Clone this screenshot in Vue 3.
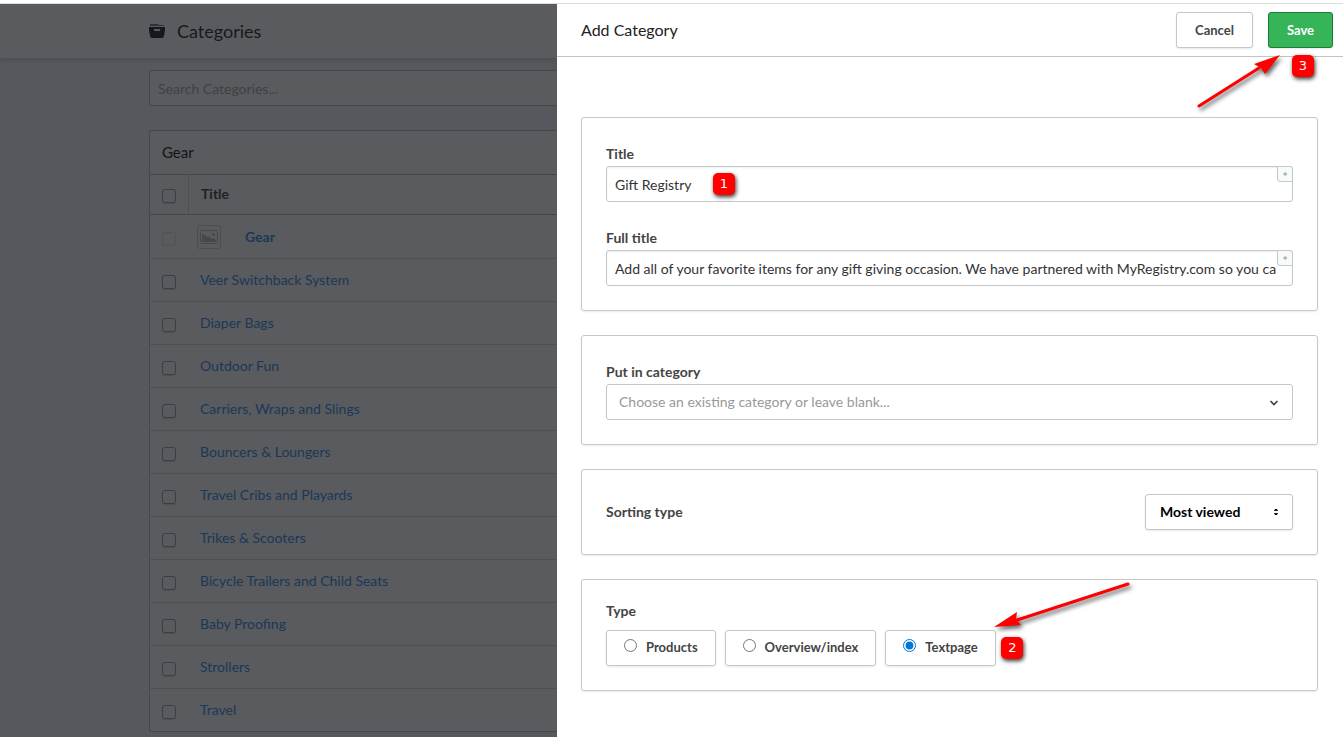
<script setup>
import { ref } from 'vue'

const search = ref('')
const title = ref('Gift Registry')
const fullTitle = ref('Add all of your favorite items for any gift giving occasion. We have partnered with MyRegistry.com so you ca')
const parent = ref('')
const sorting = ref('viewed')
const type = ref('Textpage')
const types = ['Products', 'Overview/index', 'Textpage']
const categories = [
  'Veer Switchback System',
  'Diaper Bags',
  'Outdoor Fun',
  'Carriers, Wraps and Slings',
  'Bouncers & Loungers',
  'Travel Cribs and Playards',
  'Trikes & Scooters',
  'Bicycle Trailers and Child Seats',
  'Baby Proofing',
  'Strollers',
  'Travel',
]
</script>

<template>
  <div class="app">
    <div class="topline"></div>
    <div class="shell">
      <section class="page">
        <header class="page-head">
          <svg class="archive" width="16" height="14" viewBox="0 0 16 14" aria-hidden="true">
            <path d="M1 0h8l1 1h5v1H1z" fill="#2e3136" />
            <path d="M0 3h16v3l-1 6q-.3 2-2 2H3q-1.700 0-2-2L0 6z" fill="#15191f" />
            <path d="M5 5h6v2H5z" fill="#5a5b5e" />
          </svg>
          <h1>Categories</h1>
        </header>
        <div class="page-body">
          <input v-model="search" class="search" type="text" placeholder="Search Categories..." aria-label="Search Categories" />
          <div class="panel">
            <h2>Gear</h2>
            <table>
              <thead>
                <tr>
                  <th class="pick"><input type="checkbox" aria-label="Select all" /></th>
                  <th class="name">Title</th>
                </tr>
              </thead>
              <tbody>
                <tr class="parent">
                  <td class="pick"><input type="checkbox" disabled aria-label="Gear" /></td>
                  <td class="name">
                    <a class="parent-link" href="#">
                      <span class="thumb">
                        <svg width="18" height="14" viewBox="0 0 18 14" aria-hidden="true">
                          <rect x=".5" y=".5" width="17" height="13" rx="1" fill="none" stroke="#44494c" />
                          <path d="M2 12V5l2-1 3 3 2-1 2 3 2-1 3 2v2z" fill="#44494c" />
                          <circle cx="13.500" cy="4.500" r="1.500" fill="#44494c" />
                        </svg>
                      </span>
                      Gear
                    </a>
                  </td>
                </tr>
                <tr v-for="c in categories" :key="c">
                  <td class="pick"><input type="checkbox" :aria-label="c" /></td>
                  <td class="name"><a href="#">{{ c }}</a></td>
                </tr>
              </tbody>
            </table>
          </div>
        </div>
      </section>

      <form class="drawer" @submit.prevent>
        <header class="drawer-head">
          <h2>Add Category</h2>
          <button type="button" class="btn">Cancel</button>
          <div class="anchor">
            <button type="submit" class="btn save">Save</button>
            <svg class="arrow arrow-save" width="90" height="60" viewBox="0 0 90 60" aria-hidden="true">
              <path d="M4 53L64 15" stroke="#f00" stroke-width="3" stroke-linecap="round" />
              <path d="M85 2L70 21 66 15 59 11z" fill="#f00" />
            </svg>
            <span class="mark mark-save">3</span>
          </div>
        </header>

        <div class="drawer-body">
          <div class="card">
            <div class="field">
              <label for="title">Title</label>
              <div class="control">
                <input id="title" v-model="title" type="text" />
                <span class="required">*</span>
                <span class="mark mark-title">1</span>
              </div>
            </div>
            <div class="field">
              <label for="full">Full title</label>
              <div class="control">
                <input id="full" v-model="fullTitle" type="text" />
                <span class="required">*</span>
              </div>
            </div>
          </div>

          <div class="card">
            <div class="field">
              <label for="parent">Put in category</label>
              <div class="control">
                <select id="parent" v-model="parent" class="placeholder">
                  <option value="">Choose an existing category or leave blank...</option>
                  <option v-for="c in categories" :key="c">{{ c }}</option>
                </select>
                <svg class="chevron" width="10" height="6" viewBox="0 0 10 6" aria-hidden="true">
                  <path d="M1.500 1L5 4.500 8.500 1" fill="none" stroke="#444" stroke-width="1.700" />
                </svg>
              </div>
            </div>
          </div>

          <div class="card row">
            <label for="sorting">Sorting type</label>
            <div class="control">
              <select id="sorting" v-model="sorting" class="sorting">
                <option value="viewed">Most viewed</option>
                <option value="newest">Newest</option>
              </select>
              <svg class="updown" width="6" height="6" viewBox="0 0 6 6" aria-hidden="true">
                <path d="M1 2L2 0h2l1 2zM1 4h4L4 6H2z" fill="#111" />
              </svg>
            </div>
          </div>

          <fieldset class="card">
            <div id="type-label" class="group-label">Type</div>
            <div class="options" role="radiogroup" aria-labelledby="type-label">
              <label v-for="t in types" :key="t" class="option">
                <input v-model="type" type="radio" name="type" :value="t" />
                <span>{{ t }}</span>
                <template v-if="t === 'Textpage'">
                  <svg class="arrow arrow-type" width="150" height="60" viewBox="0 0 150 60" aria-hidden="true">
                    <path d="M140 10L26 47" stroke="#f00" stroke-width="3" stroke-linecap="round" />
                    <path d="M6 53L29 38 28 45 33 51z" fill="#f00" />
                  </svg>
                  <b class="mark mark-type">2</b>
                </template>
              </label>
            </div>
          </fieldset>
        </div>
      </form>
    </div>
  </div>
</template>

<style>
body {
  overflow: hidden;
}
</style>

<style scoped>
.app,
.app * {
  box-sizing: border-box;
}
.app {
  display: flex;
  flex-direction: column;
  min-height: 100vh;
  font: 14px/20px Lato, sans-serif;
  color: #444;
  background: #fff;
}
h1,
h2 {
  margin: 0;
  font-weight: 400;
}
input,
select,
button {
  margin: 0;
  font: inherit;
  color: inherit;
}
a {
  color: #1a3857;
  text-decoration: none;
}
.topline {
  height: 4px;
  background: #fff;
  border-bottom: 1px solid #dcdcdc;
}
.shell {
  flex: 1;
  display: grid;
  grid-template-columns: minmax(0, 557fr) minmax(0, 786fr);
}

.page {
  overflow: hidden;
  background: #55595d;
}
.page-head {
  display: flex;
  align-items: center;
  gap: 12px;
  height: 54px;
  padding-left: 149px;
  background: #5a5b5e;
  box-shadow: 0 1px 4px 1px #4b4e53;
}
.page-head h1 {
  font-size: 18px;
  line-height: 24px;
  color: #16191e;
}
.page-body {
  padding: 12px 0 0 149px;
}
.search {
  display: block;
  width: 100%;
  height: 36px;
  padding: 0 8px;
  border: 1px solid #45494c;
  border-right: 0;
  border-radius: 3px 0 0 3px;
  background: #5a5b5e;
}
.search::placeholder {
  color: #3d4246;
}
.panel {
  margin-top: 24px;
  border: 1px solid #45494c;
  border-right: 0;
  border-radius: 3px 0 0 3px;
  background: #5a5b5e;
}
.panel h2 {
  height: 44px;
  padding-left: 12px;
  border-bottom: 1px solid #45494c;
  font-size: 15px;
  line-height: 42px;
  color: #111418;
}
table {
  width: 100%;
  border-spacing: 0;
}
th,
td {
  height: 43px;
  padding: 0;
  border-bottom: 1px solid #4e5153;
  text-align: left;
}
tr:last-child td {
  height: 42px;
  border-bottom: 0;
}
thead tr:last-child th,
th {
  height: 40px;
  padding-bottom: 2px;
  border-bottom: 1px solid #45494c;
  color: #1f2226;
}
.parent td {
  height: 44px;
}
.pick {
  width: 39px;
  padding-left: 12px;
}
th.pick {
  border-right: 1px solid #4e5153;
}
th.name {
  padding-left: 12px;
}
td.name {
  padding-left: 11px;
}
.parent td.name {
  padding-left: 8px;
}
.pick input {
  display: block;
  appearance: none;
  width: 14px;
  height: 14px;
  margin-top: 4px;
  border: 1px solid #3b3e42;
  border-radius: 3px;
  box-shadow: 0 1px 1px #4e5053;
}
.pick input:disabled {
  border-color: #515457;
  box-shadow: none;
}
.parent-link {
  display: flex;
  align-items: center;
  gap: 24px;
  font-weight: 700;
}
.thumb {
  display: flex;
  align-items: center;
  justify-content: center;
  width: 24px;
  height: 24px;
  border: 1px solid #4a4e51;
  border-radius: 3px;
}

.drawer-head {
  display: flex;
  align-items: center;
  height: 53px;
  padding: 0 10px 0 24px;
  border-bottom: 1px solid #c0c4c7;
}
.drawer-head h2 {
  flex: 1;
  font-size: 16px;
  color: #222;
}
.btn {
  height: 36px;
  padding: 0 18px;
  border: 1px solid #c2c8ca;
  border-radius: 3px;
  background: #fff;
  box-shadow: 0 1px 2px #e4ebea;
  font-size: 13px;
  font-weight: 700;
}
.save {
  border-color: #21793a;
  background: #35b558;
  color: #fff;
}
.anchor {
  position: relative;
  margin-left: 15px;
}
.drawer-body {
  display: flex;
  flex-direction: column;
  gap: 24px;
  padding: 60px 25px 24px 24px;
}
.card {
  min-width: 0;
  margin: 0;
  padding: 24px;
  border: 1px solid #c4c9cb;
  border-radius: 3px;
  box-shadow: 0 1px 2px #e8eded;
}
.field + .field {
  margin-top: 24px;
}
.field label {
  display: block;
  line-height: 24px;
}
.card label,
.group-label {
  font-weight: 700;
}
.row {
  display: flex;
  align-items: center;
  justify-content: space-between;
}
.control {
  position: relative;
}
.control input,
select {
  display: block;
  appearance: none;
  width: 100%;
  height: 36px;
  border: 1px solid #c2c8ca;
  border-radius: 3px;
  background: #fff;
  outline: 0;
}
.control input {
  padding: 0 16px 0 8px;
  box-shadow: inset 0 1px 2px #edf0f0;
  color: #333;
}
select {
  padding: 0 12px;
}
.placeholder {
  color: #999;
}
.sorting {
  width: 148px;
  padding: 0 14px;
  box-shadow: 0 1px 2px #e4ebea;
  font-weight: 700;
  color: #000;
}
.required {
  position: absolute;
  top: 0;
  right: 0;
  width: 16px;
  height: 16px;
  border: 1px solid #c2c8ca;
  border-radius: 0 3px 0 3px;
  background: #f8f9f9;
  font-size: 12px;
  line-height: 20px;
  font-weight: 700;
  text-align: center;
  color: #8fa6b0;
}
.chevron {
  position: absolute;
  top: 16px;
  right: 14px;
}
.updown {
  position: absolute;
  top: 15px;
  right: 14px;
}
.group-label {
  margin-bottom: 12px;
  line-height: 14px;
}
.options {
  display: flex;
  gap: 9px;
}
.option {
  position: relative;
  display: flex;
  align-items: center;
  gap: 9px;
  height: 36px;
  padding: 0 17px 2px;
  border: 1px solid #c2c8ca;
  border-radius: 3px;
  box-shadow: 0 1px 3px #e4ebea;
  font-size: 13px;
}
.option input {
  width: 13px;
  height: 13px;
  margin-bottom: 3px;
  accent-color: #0078d7;
}
.mark {
  position: absolute;
  width: 22px;
  height: 22px;
  border-radius: 5px;
  background: #f00;
  box-shadow: 1px 2px 4px #333;
  font: 13px/22px "DejaVu Sans", sans-serif;
  text-align: center;
  color: #fff;
}
.mark-save {
  top: 43px;
  left: 24px;
}
.mark-title {
  top: 7px;
  left: 107px;
}
.mark-type {
  top: 6px;
  left: 115px;
}
.arrow {
  position: absolute;
  filter: drop-shadow(2px 3px 2px #666);
  pointer-events: none;
}
.arrow-save {
  top: 41px;
  left: -73px;
}
.arrow-type {
  top: -57px;
  left: 102px;
}
</style>
